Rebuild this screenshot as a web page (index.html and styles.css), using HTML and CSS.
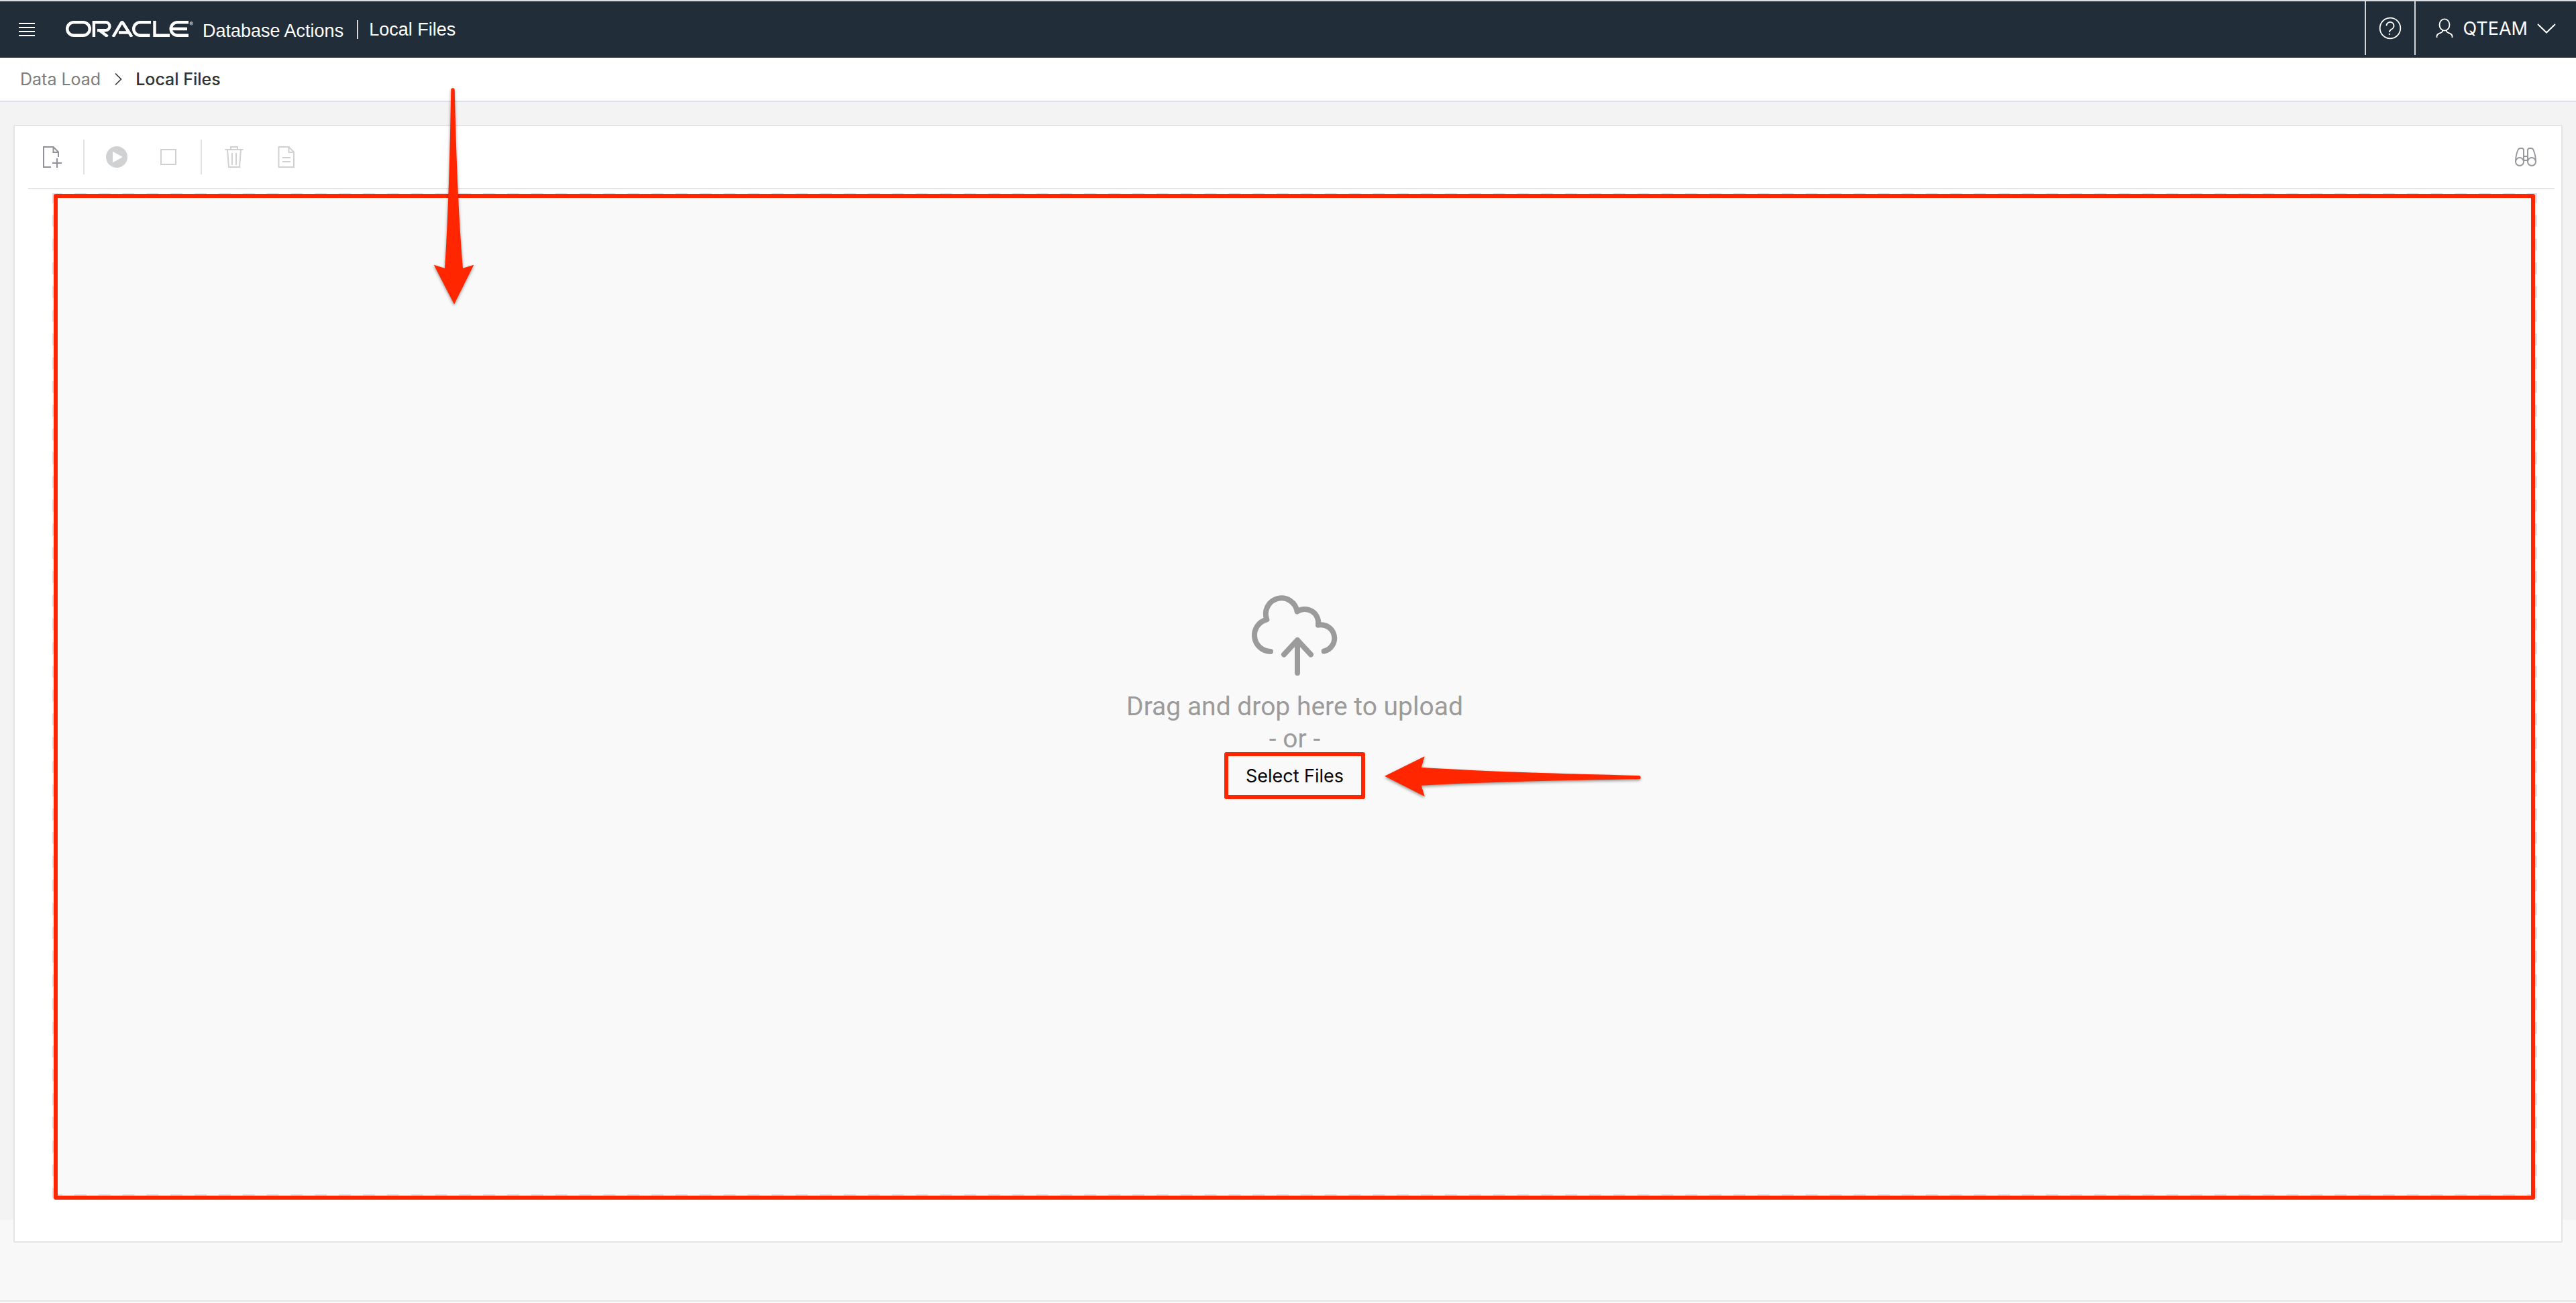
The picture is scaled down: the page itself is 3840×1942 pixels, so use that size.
FILE: index.html
```html
<!DOCTYPE html>
<html lang="en">
<head>
<meta charset="utf-8">
<title>Local Files | Database Actions</title>
<link rel="stylesheet" href="styles.css">
</head>
<body>
<header class="topbar">
  <button class="icon-button menu-button" type="button" aria-label="Menu">
    <svg width="24" height="20" viewBox="0 0 24 20" fill="#fff"><path d="M0 0h24v2H0zM0 6h24v2H0zM0 12h24v2H0zM0 18h24v2H0z"/></svg>
  </button>
  <a class="brand" href="#">
    <svg class="logo" width="190" height="24" viewBox="0 0 190 24" fill="none" stroke="#fff" stroke-width="4.4" role="img" aria-label="Oracle">
      <rect x="2.2" y="2.2" width="33.6" height="19.6" rx="9.8"/>
      <path d="M41.9 24V2.2H59.5a6 6 0 0 1 0 12H47M50 14l12.5 9.5"/>
      <path d="M70.5 24 82.5 3.5Q84 1 85.500 3.500L98.500 24M79 17.500H93"/>
      <path d="M127 2.200H111a9.800 9.800 0 0 0 0 19.600H125.500"/>
      <path d="M132.500 0V21.800H155"/>
      <path d="M183 2.200H166.500a9.800 9.800 0 0 0 0 19.600H183M158 12H181"/>
      <circle cx="187.300" cy="3.800" r="2.200" stroke-width="0.700"/>
      <path d="M186.600 5V2.700h1.200v1.100h-1.200m.6 0 .8 1.200" stroke-width="0.500"/>
    </svg>
    <span class="product">Database Actions</span>
  </a>
  <span class="divider"></span>
  <h1 class="page-name">Local Files</h1>
  <div class="account">
    <button class="icon-button help" type="button" aria-label="Help">
      <svg width="34" height="34" viewBox="0 0 34 34" fill="none" stroke="#fff" stroke-width="1.800"><circle cx="17" cy="17" r="15.300"/><path d="M11.500 13.500a5.500 5.500 0 1 1 8.500 4.500q-4.200 2.400-4.200 5"/><path d="M15.800 24.800v2.200"/></svg>
    </button>
    <button class="user" type="button">
      <svg width="26" height="30" viewBox="0 0 26 30" fill="none" stroke="#fff" stroke-width="1.800"><ellipse cx="13" cy="10" rx="7.500" ry="8.600"/><path d="M10 18v1.500q0 1.500-5 3.300-3.500 1.400-3.500 4.400V29M16 18v1.500q0 1.500 5 3.300 3.500 1.400 3.500 4.400V29"/></svg>
      <span>QTEAM</span>
      <svg class="caret" width="28" height="16" viewBox="0 0 28 16" fill="none" stroke="#fff" stroke-width="2"><path d="m1 2 13 12.500L27 2"/></svg>
    </button>
  </div>
</header>
<nav class="breadcrumb" aria-label="Breadcrumb">
  <a href="#">Data Load</a>
  <svg width="12" height="20" viewBox="0 0 12 20" fill="none" stroke="#333" stroke-width="1.600"><path d="m2 1.500 8.500 8.500L2 18.500"/></svg>
  <span class="current">Local Files</span>
</nav>
<main class="workspace">
  <section class="card">
    <div class="toolbar">
      <button class="icon-button" type="button" aria-label="Add files">
        <svg width="32" height="32" viewBox="0 0 32 32" fill="none" stroke="#8f9296" stroke-width="2"><path d="M16 31H5V1h14.500L27 8.500V16M19.500 1v8H27M25 18v14M18 25h14"/></svg>
      </button>
      <span class="rule"></span>
      <div class="group">
        <button class="icon-button" type="button" aria-label="Run" disabled>
          <svg width="32" height="32" viewBox="0 0 32 32"><circle cx="16" cy="16" r="16" fill="#d0d1d3"/><path d="M10.500 8.500 24 16l-13.500 7.500z" fill="#fff" stroke="#fff" stroke-linejoin="round"/></svg>
        </button>
        <button class="icon-button" type="button" aria-label="Stop" disabled>
          <svg width="32" height="32" viewBox="0 0 32 32" fill="none" stroke="#d0d1d3" stroke-width="2"><path d="M5 5h22v22H5z"/></svg>
        </button>
      </div>
      <span class="rule"></span>
      <div class="group">
        <button class="icon-button" type="button" aria-label="Delete" disabled>
          <svg width="32" height="32" viewBox="0 0 32 32" fill="none" stroke="#d0d1d3" stroke-width="2"><path d="M2.500 5h27M11 5V1h10v4M6 5l2 26h16l2-26M13 10v18M19 10v18"/></svg>
        </button>
        <button class="icon-button" type="button" aria-label="Settings" disabled>
          <svg width="32" height="32" viewBox="0 0 32 32" fill="none" stroke="#d0d1d3" stroke-width="2"><path d="M5.500 1h15L28 8.500V31H5.500zM20.500 1v8H28M11 17h12M11 23h12"/></svg>
        </button>
      </div>
      <button class="icon-button search" type="button" aria-label="Find">
        <svg width="32" height="28" viewBox="0 0 32 28" fill="none" stroke="#94979b" stroke-width="1.900"><circle cx="7" cy="21" r="6"/><circle cx="25" cy="21" r="6"/><path d="M1 21C1 13 3 7 4.500 3.500Q5.500 1 8 1h2q3 0 3 3v17M31 21c0-8-2-14-3.500-17.500Q26.500 1 24 1h-2q-3 0-3 3v17M13 13h6M13 19h6"/></svg>
      </button>
    </div>
    <div class="dropzone">
      <div class="prompt">
        <svg class="cloud" width="128" height="120" viewBox="0 0 128 120" fill="none" stroke="#9b9b9b" stroke-width="8" stroke-linecap="round" stroke-linejoin="round"><path d="M28 84A24.200 24.200 0 0 1 22.400 36.300 23.500 23.500 0 1 1 67.600 24.500 20.300 20.300 0 0 1 99 44.700 19.800 19.800 0 0 1 107.700 83.500M68 116V67M48 88.500 68 67l20 21.500"/></svg>
        <p>Drag and drop here to upload<br>- or -</p>
        <div class="select">
          <button type="button">Select Files</button>
          <svg class="arrow arrow-left" width="392" height="80" viewBox="0 0 392 80" fill="#ff2600"><path d="M4 36.700 63.700 7.300l-5 16.400Q180 31.500 383 36a2.650 2.650 0 0 1 0 5.300Q180 44 58.700 50.700l5 16.300z"/></svg>
        </div>
      </div>
      <svg class="arrow arrow-down" width="72" height="340" viewBox="0 0 72 340" fill="#ff2600"><path d="m37 325.500-30.300-58.800 16.300 5Q29.500 175 32.300 6a2.700 2.700 0 0 1 5.400 0Q41.500 175 50 271.700l16.300-5z"/></svg>
    </div>
  </section>
</main>
<footer class="footer"></footer>
</body>
</html>
```
FILE: styles.css
```css
* { box-sizing: border-box; }

body {
  margin: 0;
  min-height: 100vh;
  display: flex;
  flex-direction: column;
  background: #f8f8f8;
  font-family: Inter, "Liberation Sans", sans-serif;
  font-size: 27px;
}

button {
  font: inherit;
  color: inherit;
  background: none;
  border: 0;
  padding: 0;
  cursor: pointer;
}

a { color: inherit; text-decoration: none; }
svg { display: block; flex: none; }
.icon-button { display: flex; align-items: center; justify-content: center; }

.topbar {
  height: 86px;
  display: flex;
  align-items: center;
  padding-left: 28px;
  border-top: 2px solid #dcdfe3;
  background: #222d3a;
  color: #fff;
}

.brand {
  display: flex;
  align-items: baseline;
  gap: 14px;
  margin-left: 46px;
  padding-top: 4px;
}

.product, .page-name {
  font-family: "Liberation Sans", Arial, sans-serif;
  font-size: 27px;
  font-weight: 400;
  line-height: 32px;
  margin: 0;
}

.divider {
  width: 2px;
  height: 28px;
  margin: 0 16px 0 20px;
  background: #d9d9d9;
}

.account {
  display: flex;
  align-self: stretch;
  margin-left: auto;
  padding-bottom: 4px;
}

.help, .user { border-left: 2px solid #d3d5d8; }
.help { width: 74px; }

.user {
  display: flex;
  align-items: center;
  gap: 14px;
  padding: 0 30px;
}

.breadcrumb {
  height: 66px;
  display: flex;
  align-items: center;
  gap: 20px;
  padding-left: 30px;
  border-bottom: 2px solid #dde1ec;
  background: #fff;
  color: #7d7d7d;
  font-size: 25px;
}

.current { color: #333; font-weight: 500; }

.workspace {
  flex: 1;
  display: flex;
  padding: 34px 20px 86px;
  background: linear-gradient(to bottom, #f3f3f3 calc(100% - 120px), #f8f8f8 calc(100% - 120px));
}

.card {
  flex: 1;
  display: flex;
  flex-direction: column;
  border: 2px solid #e4e4e4;
  border-radius: 2px;
  background: #fff;
}

.toolbar {
  height: 94px;
  display: flex;
  align-items: center;
  gap: 32px;
  margin: 0 10px 0 20px;
  padding: 0 27px 0 18px;
  border-bottom: 2px solid #e4e4e4;
}

.group { display: flex; gap: 45px; }
.rule { width: 2px; height: 52px; background: #e2e2e2; }
.search { margin-left: auto; }

/* Dashed edge: 18px dashes that end in a 15px corner on each side */
.dropzone {
  --dash-x: linear-gradient(to right, #dde1e5 18px, transparent 18px);
  --dash-y: linear-gradient(to bottom, #dde1e5 18px, transparent 18px);
  position: relative;
  flex: 1;
  display: flex;
  align-items: center;
  justify-content: center;
  margin: 6px 36px 64px 56px;
  padding-top: 4px;
  background:
    var(--dash-x) -3px 0 / calc((100% - 12px) / 103) 6px repeat-x,
    var(--dash-x) -3px 100% / calc((100% - 12px) / 103) 6px repeat-x,
    var(--dash-y) 0 -3px / 6px calc((100% - 12px) / 42) repeat-y,
    var(--dash-y) 100% -3px / 6px calc((100% - 12px) / 42) repeat-y,
    #f9f9f9;
}

.dropzone::after {
  content: "";
  position: absolute;
  inset: 1px 3px -2px 2px;
  border: 6px solid #ff2600;
  border-radius: 3px;
  pointer-events: none;
}

.prompt {
  display: flex;
  flex-direction: column;
  align-items: center;
}

.cloud { overflow: visible; }

.prompt p {
  margin: 22px 0 -4px;
  color: #9b9b9b;
  font-family: Roboto, "Liberation Sans", sans-serif;
  font-size: 39px;
  line-height: 48px;
  text-align: center;
}

.select { position: relative; color: #000; }

.select button {
  width: 210px;
  height: 70px;
  border: 6px solid #ff2600;
  border-radius: 3px;
}

.arrow {
  position: absolute;
  filter: drop-shadow(0 2px 2px rgba(0, 0, 0, 0.4));
  pointer-events: none;
}

.arrow-left { left: 235px; top: -1px; }
.arrow-down { left: 562px; top: -160px; z-index: 1; }

.footer {
  height: 4px;
  border-top: 2px solid #e6e6e6;
  background: #fafafa;
}
```
